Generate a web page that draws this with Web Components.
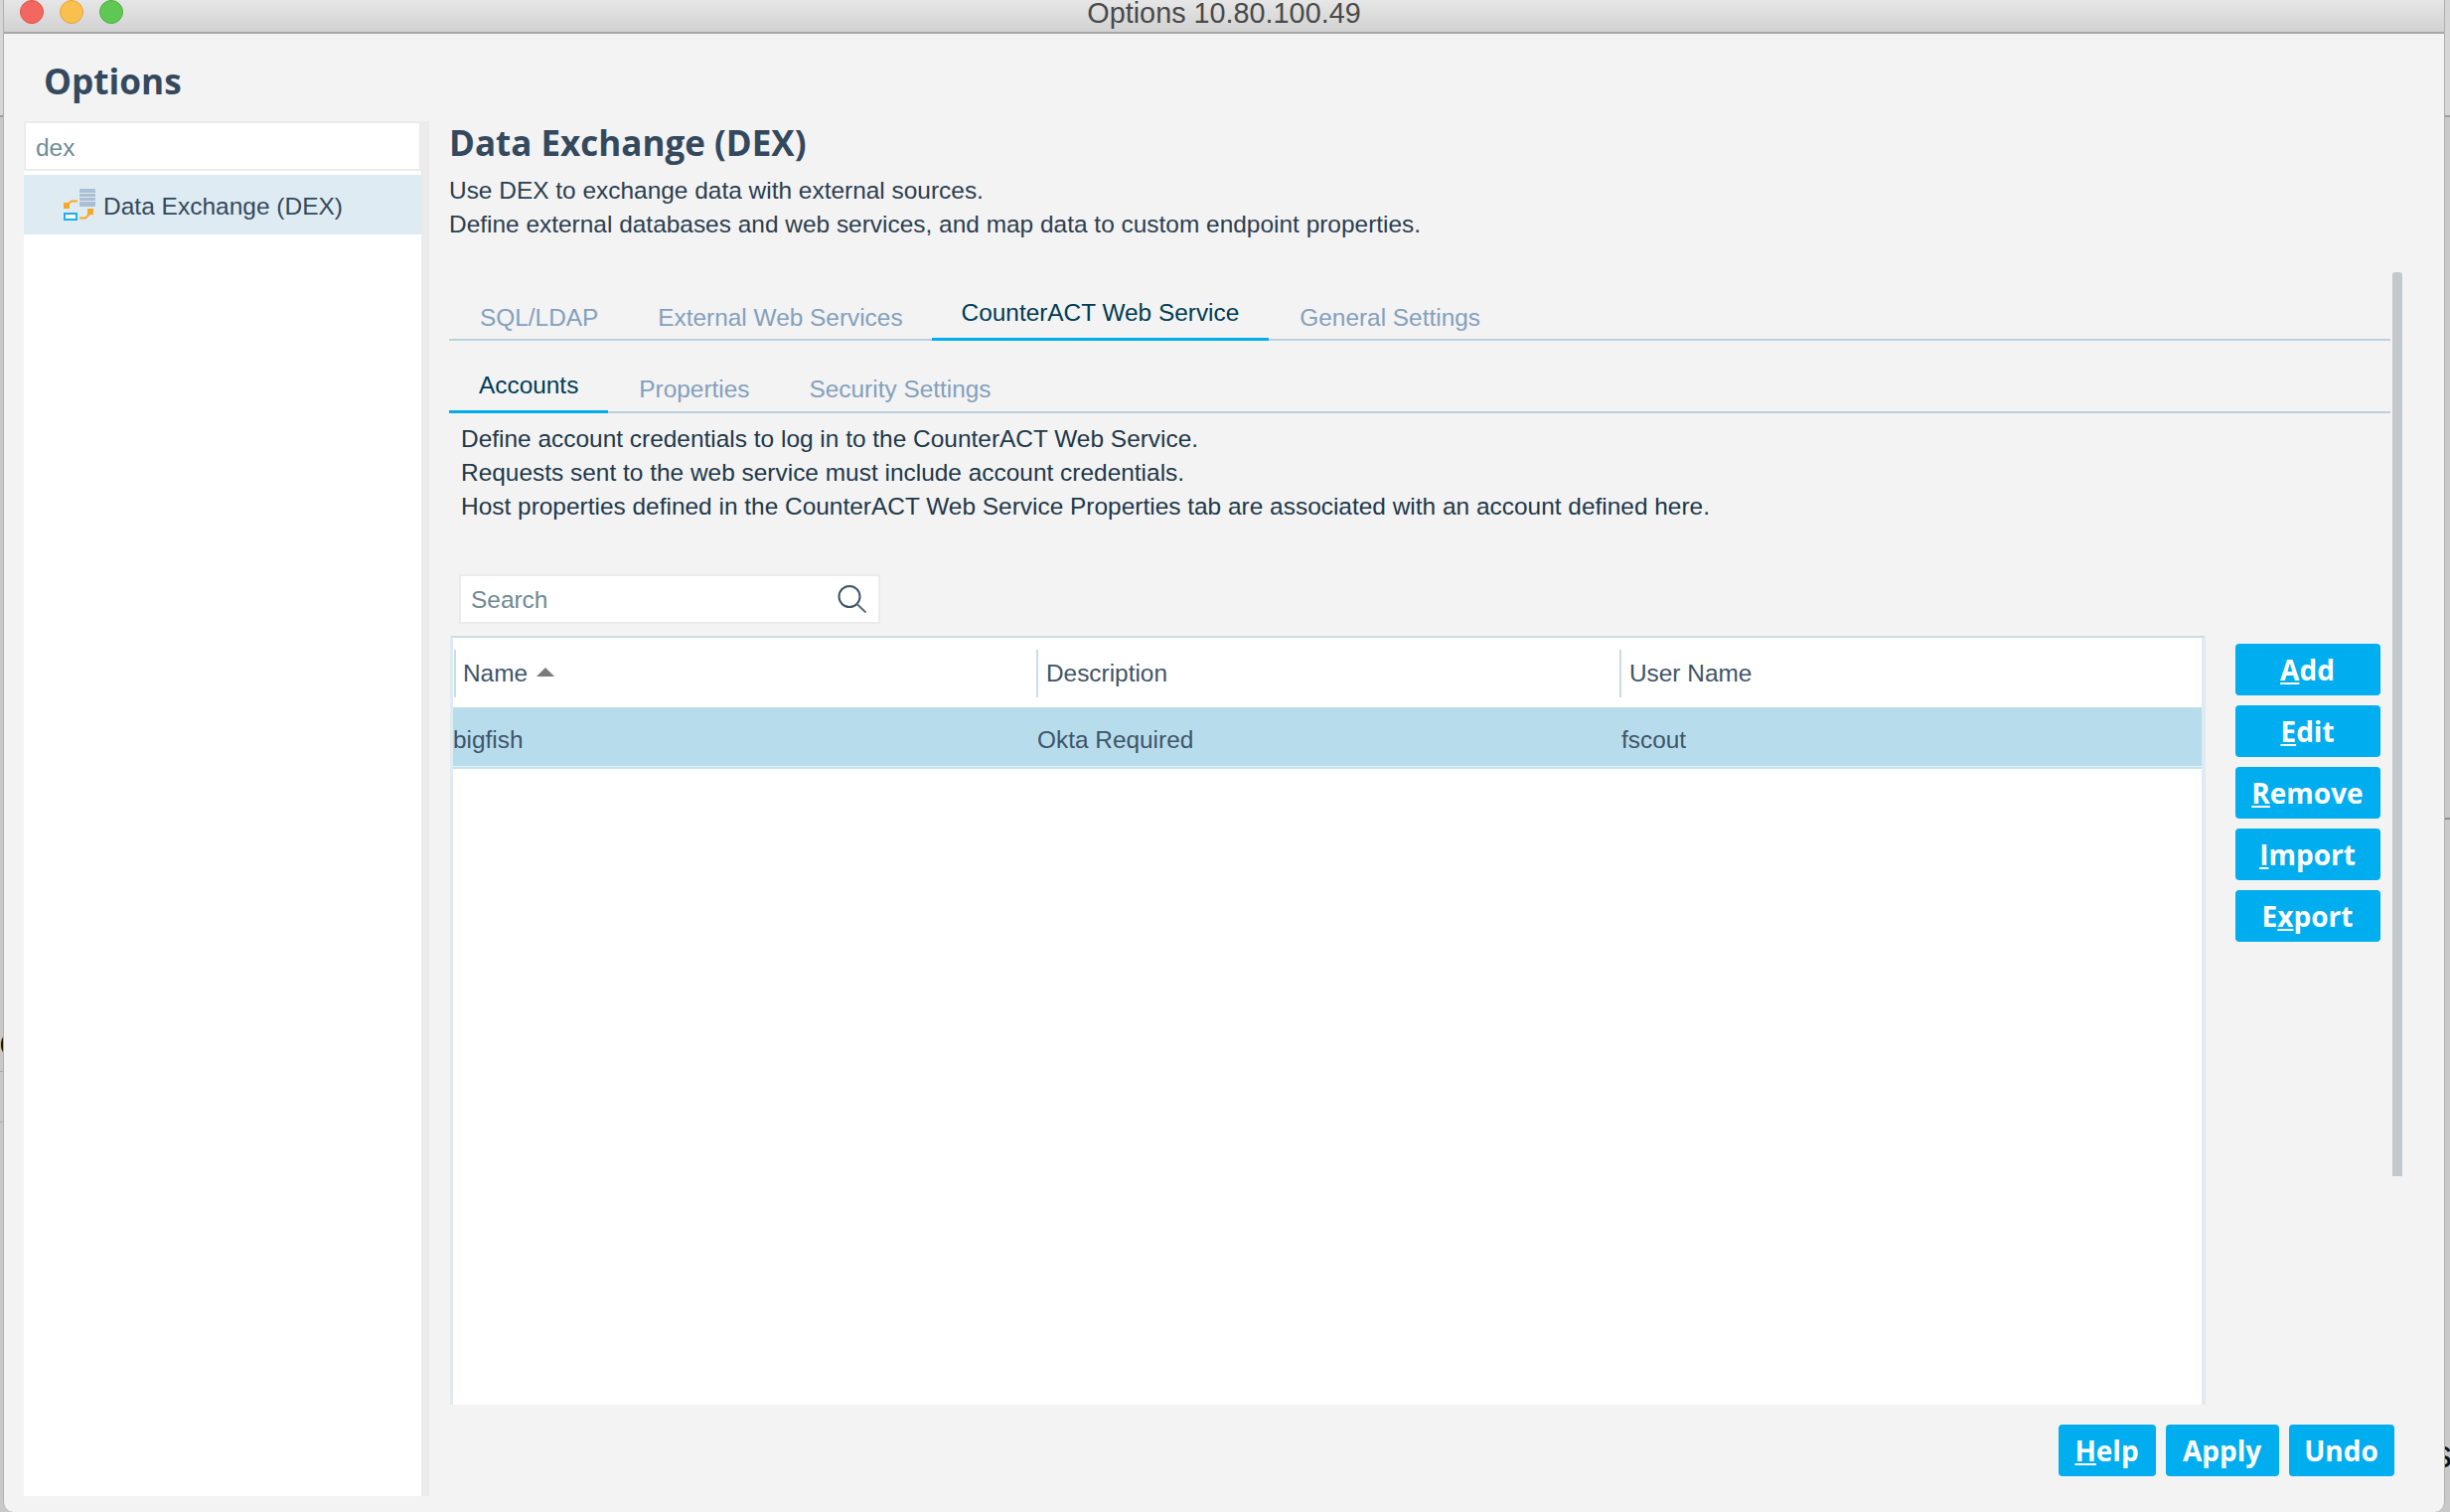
<!DOCTYPE html>
<html>
<head>
<meta charset="utf-8">
<title>Options 10.80.100.49</title>
<style>
    html, body { margin: 0; height: 100%; }
    body {
        position: relative;
        width: 2466px;
        height: 1522px;
        overflow: hidden;
        background-color: #c9c9c9;
        background-repeat: no-repeat;
        background-size: 4px 100%, 6px 100%;
        background-position: left top, right top;
        background-image:
            linear-gradient(#d6d6d6 0, #d6d6d6 116px, #9c9c9c 116px, #9c9c9c 118px, #c9c9c9 118px, #c9c9c9 1078px, #a8a8a8 1078px, #a8a8a8 1079px, #c9c9c9 1079px, #c9c9c9 1129px, #a8a8a8 1129px, #a8a8a8 1130px, #c9c9c9 1130px),
            linear-gradient(#d6d6d6 0, #d6d6d6 116px, #9c9c9c 116px, #9c9c9c 118px, #c9c9c9 118px, #c9c9c9 823px, #8f8f8f 823px, #8f8f8f 825px, #c9c9c9 825px);
        font-family: "Liberation Sans", Arial, sans-serif;
    }
    /* bits of the page behind the window, they peek out at both edges */
    .behind { position: absolute; font-family: "Liberation Sans", Arial, sans-serif; color: #111; line-height: 1; }
    .behind.left { left: 0; top: 1041px; font-size: 18px; font-weight: bold; }
    .behind.right { left: 2449px; top: 1445px; font-size: 38px; }
    mac-window { position: relative; z-index: 1; }
</style>
</head>
<body>

<span class="behind left">(</span>
<span class="behind right">s</span>

<template id="window-tpl">
    <style>
        :host { display: flex; flex-direction: column; height: 1522px; margin: 0 5px 0 3px; background: #f3f3f3; border-left: 1px solid #b0b0b0; border-right: 1px solid #b0b0b0; border-radius: 0 0 10px 10px; overflow: hidden; }
        .titlebar { height: 32px; flex: none; display: flex; align-items: flex-start; justify-content: center; position: relative; background: linear-gradient(#e6e6e6, #d2d2d2); border-bottom: 2px solid #a9a9a9; }
        .title { font: 28.8px/26px "Liberation Sans", Arial, sans-serif; color: #4a4a4a; }
        .lights { position: absolute; left: 16px; top: 0; display: flex; gap: 16px; }
        .lights i { width: 24px; height: 24px; border-radius: 50%; box-sizing: border-box; }
        .red { background: #f2675f; border: 1px solid #e0504a; }
        .yellow { background: #f9c04f; border: 1px solid #e3a63a; }
        .green { background: #5fc853; border: 1px solid #4eae44; }
        .body { flex: 1; display: flex; flex-direction: column; min-height: 0; }
    </style>
    <div class="titlebar">
        <div class="lights"><i class="red"></i><i class="yellow"></i><i class="green"></i></div>
        <div class="title"><slot name="title"></slot></div>
    </div>
    <div class="body"><slot></slot></div>
</template>

<template id="options-tpl">
    <style>
        :host { display: flex; flex-direction: column; flex: 1; min-height: 0; }
        h1 { margin: 0; flex: none; padding: 22px 0 16px 40px; font: bold 35.2px/50px "Open Sans", sans-serif; color: #34495e; }
        .columns { flex: 1; display: flex; min-height: 0; padding: 0 0 16px 20px; }
        .side { flex: none; width: 408px; }
        .main { flex: 1; min-width: 0; padding-left: 20px; }
    </style>
    <h1>Options</h1>
    <div class="columns">
        <div class="side"><slot name="side"></slot></div>
        <div class="main"><slot></slot></div>
    </div>
</template>

<template id="side-tree-tpl">
    <style>
        :host { display: block; height: 100%; box-sizing: border-box; background: #fff; border-right: 8px solid #ebebeb; }
        .filter { height: 50px; box-sizing: border-box; border: 2px solid #ebebeb; padding-left: 10px; font: 24.4px/49px "Liberation Sans", sans-serif; color: #6f8a96; }
        .item { margin-top: 4px; height: 60px; display: flex; align-items: center; padding-left: 40px; background: #dfebf2; font: 24.5px "Liberation Sans", sans-serif; color: #34495e; }
        .item span { margin-top: 3px; }
        svg { width: 32px; height: 32px; margin-right: 8px; flex: none; }
    </style>
    <div class="filter">dex</div>
    <div class="item">
        <svg viewBox="0 0 32 32">
            <rect x="16" y="0" width="16" height="18" rx="1" fill="#a9bfd4"/>
            <path d="M16 4.5h16M16 8.5h16M16 12.5h16" stroke="#dfe8ef" stroke-width="1.2"/>
            <path d="M14 12.5H8L3 16" fill="none" stroke="#f9a825" stroke-width="2"/>
            <rect x="0" y="14" width="6" height="6" fill="#f9a825"/>
            <rect x="1" y="25" width="12" height="6" fill="#fff" stroke="#1cb0ea" stroke-width="2"/>
            <path d="M16 29.5h6l6-6" fill="none" stroke="#f9a825" stroke-width="2"/>
            <rect x="24" y="20" width="6" height="6" fill="#f9a825"/>
        </svg>
        <span><slot></slot></span>
    </div>
</template>

<template id="tab-bar-tpl">
    <style>
        :host { display: flex; flex: none; height: var(--bar-h, 50px); box-sizing: border-box; border-bottom: 2px solid #bccfdd; margin-right: 54px; }
    </style>
    <slot></slot>
</template>

<template id="tab-item-tpl">
    <style>
        :host { display: block; box-sizing: border-box; height: calc(100% + 2px); padding: 0 29px 0 31px; font: 24.4px/1 "Liberation Sans", sans-serif; color: #84a0bc; border-bottom: 3px solid transparent; }
        :host([active]) { color: #003c54; border-bottom-color: #00aeef; padding: 0 30px 0 30px; }
        div { padding-top: var(--tab-pad, 15px); }
        :host([active]) div { padding-top: var(--tab-pad-active, 10px); }
    </style>
    <div><slot></slot></div>
</template>

<template id="blue-button-tpl">
    <style>
        :host { display: flex; flex: none; align-items: center; justify-content: center; box-sizing: border-box; height: 52px; padding: 0 1px 1px 0; border-radius: 4px; background: #00aeef; color: #fff; font: bold 28px/1 "Open Sans", sans-serif; }
        ::slotted(u) { text-underline-offset: 2px; text-decoration-thickness: 2px; text-decoration-skip-ink: none; }
    </style>
    <slot></slot>
</template>

<template id="copy-text-tpl">
    <style>
        :host { display: block; line-height: 34px; }
    </style>
    <slot></slot>
</template>

<template id="accounts-table-tpl">
    <style>
        :host { display: block; flex: none; background: #fff; border-top: 2px solid #c8dde8; border-left: 3px solid #dfebf2; border-right: 4px solid #dfebf2; font: 24.4px "Liberation Sans", sans-serif; color: #3f5468; height: 774px; box-sizing: border-box; }
        .grid { display: grid; grid-template-columns: 586px 587px 1fr; }
        .head { height: 70px; box-sizing: border-box; padding-top: 12px; }
        .head div { height: 48px; margin-left: 1px; border-left: 2px solid #c8dde8; padding-left: 8px; display: flex; align-items: center; gap: 9px; }
        .head div:first-child { padding-left: 7px; }
        .head svg { width: 18px; height: 9px; margin-top: -4px; }
        .row { height: 59px; box-sizing: border-box; background: #b7dded; border-top: 1px solid #c3d8e0; line-height: 55px; padding-top: 4px; }
        .row div:nth-child(2) { padding-left: 2px; }
        .row div:nth-child(3) { padding-left: 3px; }
        .after { height: 2px; border-top: 1px solid #e0f3f9; background: #c4e4ee; }
    </style>
    <div class="grid head">
        <div><span>Name</span><svg viewBox="0 0 18 9"><path d="M9 0l9 9H0z" fill="#7a7a7a"/></svg></div>
        <div>Description</div>
        <div>User Name</div>
    </div>
    <div class="grid row">
        <div>bigfish</div>
        <div>Okta Required</div>
        <div>fscout</div>
    </div>
    <div class="after"></div>
</template>

<template id="dex-panel-tpl">
    <style>
        :host { display: flex; flex-direction: column; height: 100%; font: 24.45px "Liberation Sans", sans-serif; color: #2c3e50; position: relative; }
        h2 { margin: 0; flex: none; font: bold 35px/44px "Open Sans", sans-serif; color: #34495e; }
        .intro { margin-top: 9px; flex: none; }
        .tabs { margin-top: 50px; --bar-h: 50px; --tab-pad: 15px; --tab-pad-active: 10px; }
        .sub { margin-top: 20px; --bar-h: 53px; --tab-pad: 17px; --tab-pad-active: 13px; }
        .desc { padding: 9px 0 0 12px; flex: none; color: #22384a; }
        .tools { margin: 51px 0 0 10px; flex: none; width: 424px; height: 50px; box-sizing: border-box; border: 2px solid #ebebeb; background: #fff; display: flex; align-items: center; justify-content: space-between; padding: 0 11px 0 10px; color: #6f8a96; }
        .tools span { padding-top: 2px; }
        .tools svg { width: 30px; height: 28px; }
        .content { display: flex; flex: none; gap: 30px; margin: 12px 0 0 1px; }
        accounts-table { width: 1767px; }
        .side { width: 146px; flex: none; display: flex; flex-direction: column; gap: 10px; padding-top: 8px; }
        .scroll { position: absolute; left: 1956px; top: 152px; width: 10px; height: 910px; background: #c2c8cc; border-radius: 3px 3px 0 0; }
        .foot { position: absolute; right: 50px; bottom: 20px; display: flex; gap: 10px; }
    </style>
    <h2><slot name="heading"></slot></h2>
    <copy-text class="intro"><slot name="intro"></slot></copy-text>
    <tab-bar class="tabs">
        <tab-item>SQL/LDAP</tab-item>
        <tab-item>External Web Services</tab-item>
        <tab-item active>CounterACT Web Service</tab-item>
        <tab-item>General Settings</tab-item>
    </tab-bar>
    <tab-bar class="sub">
        <tab-item active>Accounts</tab-item>
        <tab-item>Properties</tab-item>
        <tab-item>Security Settings</tab-item>
    </tab-bar>
    <copy-text class="desc"><slot name="desc"></slot></copy-text>
    <div class="tools">
        <span>Search</span>
        <svg viewBox="0 0 30 28" fill="none"><circle cx="12" cy="11.5" r="10.5" stroke="#3f5468" stroke-width="2"/><path d="M19.5 19l9 8.5" stroke="#5a6b7a" stroke-width="2"/></svg>
    </div>
    <div class="content">
        <accounts-table></accounts-table>
        <div class="side">
            <blue-button><u>A</u>dd</blue-button>
            <blue-button><u>E</u>dit</blue-button>
            <blue-button><u>R</u>emove</blue-button>
            <blue-button><u>I</u>mport</blue-button>
            <blue-button>E<u>x</u>port</blue-button>
        </div>
    </div>
    <div class="scroll"></div>
    <div class="foot">
        <blue-button style="width:98px"><u>H</u>elp</blue-button>
        <blue-button style="width:114px">Apply</blue-button>
        <blue-button style="width:106px">Undo</blue-button>
    </div>
</template>

<mac-window>
    <span slot="title">Options 10.80.100.49</span>
    <options-page>
        <side-tree slot="side">Data Exchange (DEX)</side-tree>
        <dex-panel>
            <span slot="heading">Data Exchange (DEX)</span>
            <div slot="intro">
                <div>Use DEX to exchange data with external sources.</div>
                <div>Define external databases and web services, and map data to custom endpoint properties.</div>
            </div>
            <div slot="desc">
                <div>Define account credentials to log in to the CounterACT Web Service.</div>
                <div>Requests sent to the web service must include account credentials.</div>
                <div>Host properties defined in the CounterACT Web Service Properties tab are associated with an account defined here.</div>
            </div>
        </dex-panel>
    </options-page>
</mac-window>

<script>
    // every element just clones its template into an open shadow root
    function register(name, tplId) {
        customElements.define(name, class extends HTMLElement {
            constructor() {
                super();
                var root = this.attachShadow({mode: 'open'});
                root.appendChild(document.getElementById(tplId).content.cloneNode(true));
            }
        });
    }
    register('mac-window', 'window-tpl');
    register('options-page', 'options-tpl');
    register('side-tree', 'side-tree-tpl');
    register('tab-bar', 'tab-bar-tpl');
    register('tab-item', 'tab-item-tpl');
    register('blue-button', 'blue-button-tpl');
    register('copy-text', 'copy-text-tpl');
    register('accounts-table', 'accounts-table-tpl');
    register('dex-panel', 'dex-panel-tpl');
</script>
</body>
</html>
